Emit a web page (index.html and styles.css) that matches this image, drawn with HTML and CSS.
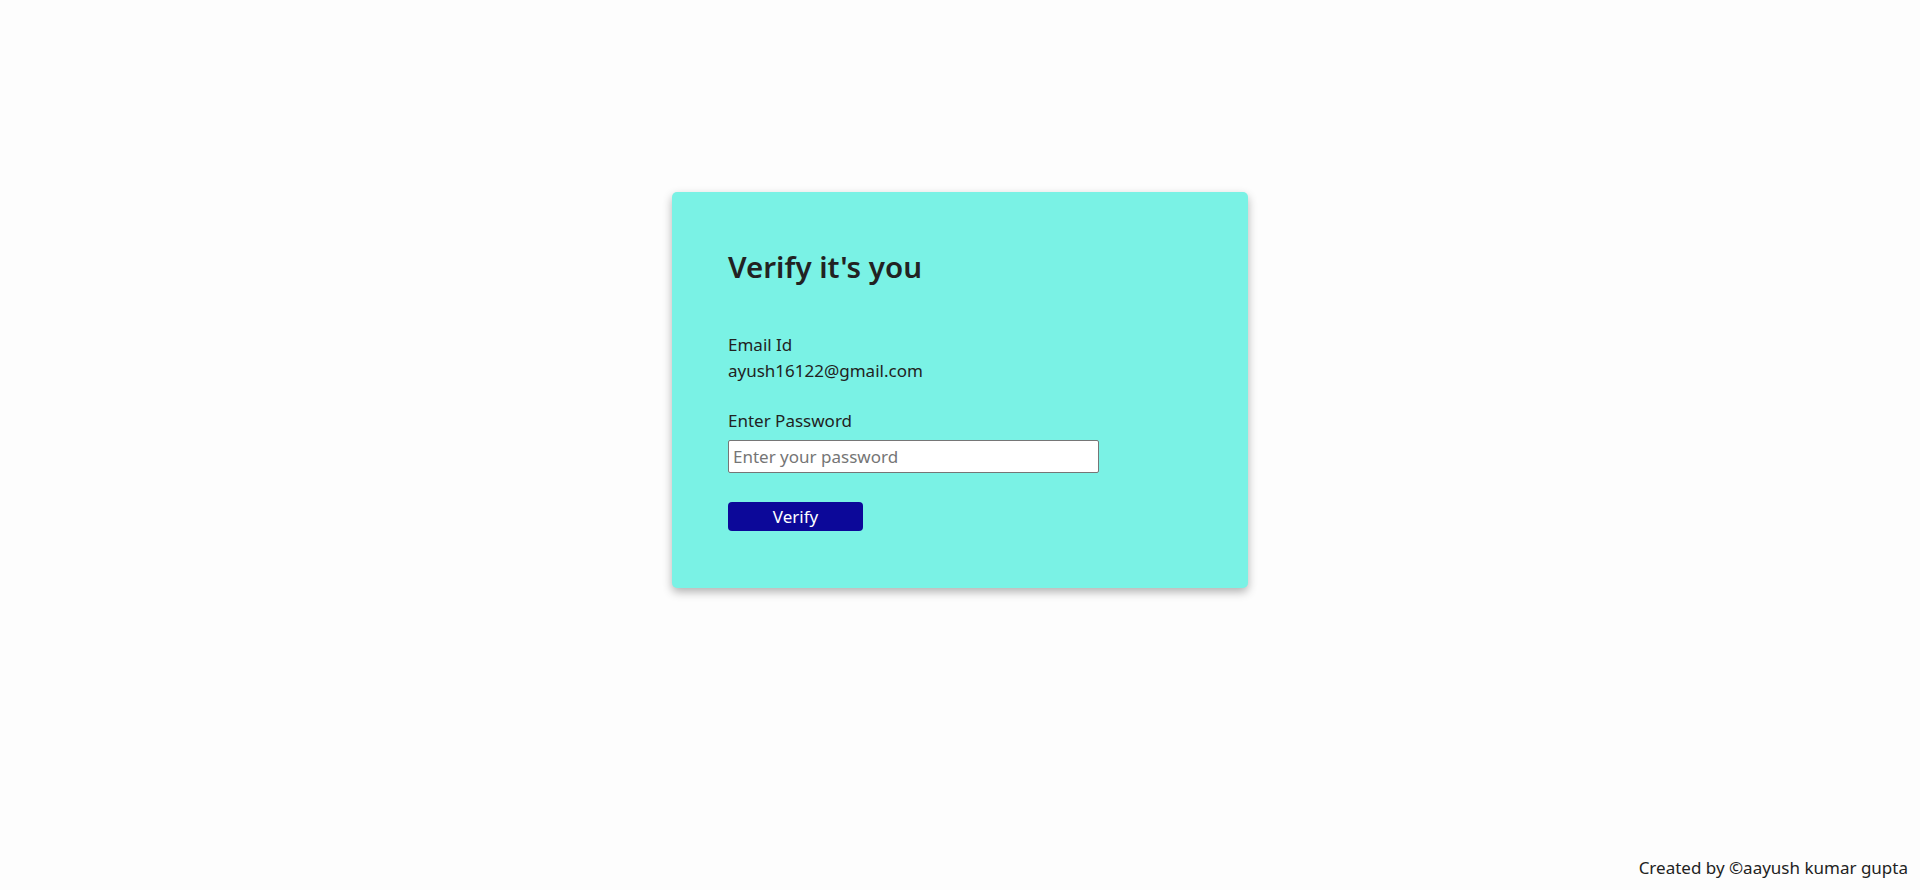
FILE: index.html
```html
<!DOCTYPE html>
<html lang="en">
<head>
<meta charset="utf-8">
<title>Verify it's you</title>
<link rel="stylesheet" href="styles.css">
</head>
<body>
<main class="page">
  <form class="card">
    <h1 class="title">Verify it's you</h1>
    <div class="field">
      <span class="label">Email Id</span>
      <span class="value">ayush16122@gmail.com</span>
    </div>
    <div class="field">
      <label class="label" for="pw">Enter Password</label>
      <input class="input" id="pw" type="password" placeholder="Enter your password">
    </div>
    <button class="btn" type="button">Verify</button>
  </form>
</main>
<footer class="footer">Created by ©aayush kumar gupta</footer>
</body>
</html>
```
FILE: styles.css
```css
* { box-sizing: border-box; }
html, body { height: 100%; }
body {
  margin: 0;
  background: #fdfdfd;
  font-family: "Noto Sans", "Open Sans", sans-serif;
  color: #222;
  display: flex;
  flex-direction: column;
}
.page {
  flex: 1;
  display: flex;
  justify-content: center;
  align-items: flex-start;
  padding-top: 192px;
}
.card {
  width: 576px;
  height: 396px;
  background: #7af2e5;
  border-radius: 5px;
  box-shadow: 0 4px 10px rgba(0,0,0,0.3);
  padding: 55px 56px 0;
  display: flex;
  flex-direction: column;
  align-items: flex-start;
}
.title {
  margin: 0;
  font-size: 29.5px;
  font-weight: 600;
  line-height: 40px;
}
.field {
  display: flex;
  flex-direction: column;
  align-items: flex-start;
  font-size: 17px;
  line-height: 26px;
}
.field:first-of-type { margin-top: 45px; }
.field + .field { margin-top: 24px; }
.input {
  margin-top: 6px;
  width: 371px;
  height: 33px;
  border: 1px solid #767676;
  border-radius: 2px;
  background: #fff;
  padding: 0 4px;
  font-family: inherit;
  font-size: 17px;
  color: #222;
}
.input::placeholder { color: #757575; }
.btn {
  margin-top: 29px;
  width: 135px;
  height: 29px;
  border: none;
  border-radius: 4px;
  background: #0c0899;
  color: #fff;
  font-family: inherit;
  font-size: 17px;
  padding: 0;
}
.footer {
  text-align: right;
  padding: 0 12px 11px;
  font-size: 17px;
  line-height: 22px;
}
```
